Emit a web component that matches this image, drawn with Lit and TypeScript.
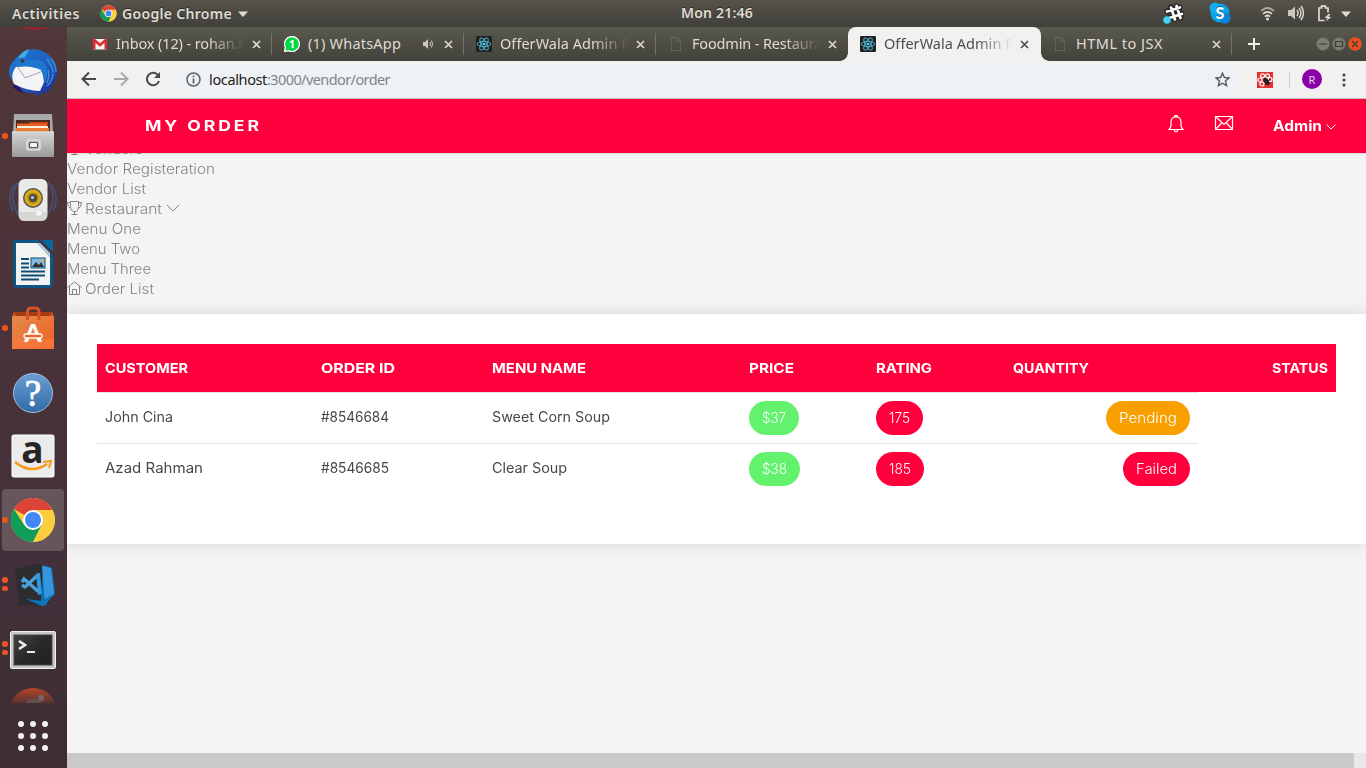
import { LitElement, html, css, svg, nothing } from "lit";
import { customElement, property, query } from "lit/decorators.js";
import { classMap } from "lit/directives/class-map.js";

/**
 * A line of text that spans `w` pixels. Tracking is adjusted by default;
 * with `wide` the letters themselves are widened.
 */
@customElement("fit-text")
class FitText extends LitElement {
  static styles = css`
    :host { display: inline-block; white-space: pre; text-align: left; }
    span { display: inline-block; transform-origin: 0 50%; }
  `;
  @property({ type: String }) t = "";
  @property({ type: Number }) w = 0;
  @property({ type: Boolean }) wide = false;
  @query("span") box!: HTMLSpanElement;
  firstUpdated() {
    const natural = this.box.getBoundingClientRect().width;
    if (this.wide) {
      this.style.width = `${this.w}px`;
      this.box.style.transform = `scaleX(${this.w / natural})`;
    } else {
      this.box.style.letterSpacing = `${(this.w - natural) / this.t.length}px`;
    }
  }
  render() {
    return html`<span>${this.t}</span>`;
  }
}

const chromeLogo = svg`
  <circle cx="24" cy="24" r="22" fill="#fcce3e"/>
  <path d="M24 24 4.900 13A22 22 0 0 1 43.100 13.400L43.500 14.200H24Z" fill="#dc4437"/>
  <path d="M4.900 13A22 22 0 0 0 24 46L33 29 24 24 14.500 28Z" fill="#109d58"/>
  <path d="M24 14h19.500A22 22 0 0 1 24 46l8.700-17Z" fill="#fcce3e"/>
  <circle cx="24" cy="24" r="10" fill="#fff"/>
  <circle cx="24" cy="24" r="8" fill="#4387f5"/>`;

const dockIcons: Record<string, unknown> = {
  mail: svg`
    <defs><linearGradient id="tb" x1="0" y1="0" x2="1" y2="1"><stop offset="0" stop-color="#1b7ad0"/><stop offset=".5" stop-color="#1f62c4"/><stop offset="1" stop-color="#23238c"/></linearGradient></defs>
    <path d="M7 10Q17-1 30 2 42 5 47 17 50 29 44 36q-2 6-9 10l1-3q-4 4-10 5l1-3q-9 1-14-3-6-2-9-8Q-3 24 2 16Z" fill="url(#tb)"/>
    <path d="M5 36 4 39q5 5 10 6l-3-6Z" fill="#2b1864"/>
    <path d="m6 20 5-4 22 5 2 13-4 9q-13 0-26-7-4-8 1-16Z" fill="#f3f4f6"/>
    <path d="m8 18 8 12 18-7" fill="none" stroke="#a0a4aa" stroke-width="1"/>
    <path d="M7 18Q9 4 22 3q-7 4-6 11 12-6 20 2 5 8 0 19-2-9-4-13Q22 17 9 19Z" fill="#1f78d0"/>
    <path d="M9 10 14 4 20 1l-4 8Z" fill="#45aee6"/>
    <circle cx="13.500" cy="13" r="2" fill="#383c46"/>
    <path d="M38 11q6 8 6 14M42 11q5 6 5 13M39 22q2 6-1 13M44 26q-1 8-6 12" fill="none" stroke="#3592dc" stroke-width="1.500"/>`,
  files: svg`
    <defs><linearGradient id="fg" x1="0" y1="0" x2="0" y2="1"><stop offset="0" stop-color="#d4d4d4"/><stop offset="1" stop-color="#9b9b9b"/></linearGradient></defs>
    <path d="M5 2H43L44 20H4Z" fill="#a9a9a9"/>
    <path d="M7 8H41V22H7Z" fill="#4b2a22"/>
    <path d="M20 10h19v3H20Z" fill="#c24514"/><path d="M8 11.500H38v3H8Z" fill="#e9601e"/>
    <path d="M8 14H39v2H8Z" fill="#fff0df"/><path d="M7 16H40v3.500H7Z" fill="#f07b36"/>
    <rect x="3" y="19.500" width="42" height="25.500" rx="1" fill="url(#fg)"/>
    <path d="M3 20H45" stroke="#e6e6e6"/>
    <rect x="18" y="28" width="13" height="10" rx="2" fill="#bdbdbd" stroke="#eee" stroke-width="1.200"/>
    <rect x="20.500" y="30.500" width="8" height="5" rx="1" fill="#f8f8f8" stroke="#555" stroke-width="1.200"/>`,
  music: svg`
    <g fill="none" stroke="#465684" stroke-width="1.600" opacity=".8"><path d="M5 9Q-3 22 4 35M9 6Q-1 21 9 38M43 9q8 13 1 26M39 6q10 15 0 32"/></g>
    <rect x="9.500" y="3" width="29" height="42" rx="6" fill="#e9eae7"/>
    <path d="M10 36H38v5q-2 4-6 4H16q-5 0-6-4Z" fill="#d6d7d4"/>
    <circle cx="24" cy="22" r="10" fill="#555753"/><circle cx="24" cy="22" r="8.500" fill="#d9ab19"/>
    <circle cx="24" cy="22" r="5.500" fill="#b38b10"/><circle cx="24" cy="22" r="4" fill="#494b4d"/>
    <circle cx="23.500" cy="21.500" r="1.600" fill="#c3c6c8"/><circle cx="30" cy="37" r="3.500" fill="#f5f5f3" stroke="#cdcdc9" stroke-width=".7"/>`,
  writer: svg`
    <path d="M7 0H29L44 15V44q0 4-4 4H8q-4 0-4-4V3Q4 0 7 0Z" fill="#0e5585"/>
    <path d="M32 0H42q2 0 2 2V12Z" fill="#0369a3"/>
    <path d="M7 3H28L41 17V45H7Z" fill="#f3f3f2"/>
    <path d="m28 3 13 14V13L31 3Z" fill="#bfcbd2"/>
    <path d="M12 19h8M12 23.500h8M12 27.500h8M12 31.500H36M12 35.500H36M12 39.500H30" stroke="#0e4d76" stroke-width="2"/>
    <rect x="22" y="18" width="14" height="10" fill="#80bce7" stroke="#0e4d76"/>
    <path d="m23 27 4-5 3 3 2-3 3 5Z" fill="#333"/><circle cx="33.500" cy="20.500" r="1.300" fill="#fdb913"/>`,
  store: svg`
    <defs><linearGradient id="sg" x1="0" y1="0" x2="1" y2="1"><stop offset="0" stop-color="#e58a50"/><stop offset="1" stop-color="#f0601f"/></linearGradient></defs>
    <path d="M5 8H43L45 13H3Z" fill="#a63a12"/><path d="M3 13 5 8l3 5M45 13l-2-5-3 5" fill="#cf5521"/>
    <rect x="3" y="12" width="42" height="33" fill="url(#sg)"/>
    <path d="M3 35H45V45H3Z" fill="#fa7d40" opacity=".6"/>
    <path d="M18.500 16V8q0-4 4-4h3.500q4 0 4 4v8" fill="none" stroke="#d85120" stroke-width="3"/>
    <text x="24" y="38" text-anchor="middle" font-family="Lato" font-weight="900" font-size="25" fill="#fff">A</text>
    <rect x="15" y="30" width="18" height="4" rx="2" fill="#ed6526" stroke="#fff" stroke-width="1.300"/>`,
  help: svg`
    <defs><linearGradient id="hg" x1="0" y1="0" x2="0" y2="1"><stop offset="0" stop-color="#6b9ed4"/><stop offset="1" stop-color="#2f6ba7"/></linearGradient></defs>
    <circle cx="24" cy="25" r="19.500" fill="url(#hg)" stroke="#a2bcd7" stroke-width="1"/>
    <text x="24" y="38" text-anchor="middle" font-family="Liberation Serif" font-size="37" fill="#fff" stroke="#fff" stroke-width=".8">?</text>`,
  amazon: svg`
    <rect x="3" y="3" width="42" height="42" rx="1.500" fill="#ebebeb" stroke="#fff"/>
    <text x="23.500" y="30.500" text-anchor="middle" font-family="Open Sans" font-weight="700" font-size="37" fill="#252525">a</text>
    <path d="M6 30q16 13 32 2" fill="none" stroke="#f89a17" stroke-width="2.600"/>
    <path d="m34 30 8-1-2 7" fill="none" stroke="#f89a17" stroke-width="2"/>`,
  chrome: chromeLogo,
  code: svg`
    <path d="m6 9 24-5 13 6-2 33-31 3Z" fill="#2b2d2f"/>
    <path d="m34 5 9 3 3 26-10 10-4-2Z" fill="#0a71b4"/>
    <path d="m33 6 9 2 3 26-9 8Z" fill="#3496dc"/>
    <path d="m30 14-14 13-3-2M31 33 15 19l-2 3" fill="none" stroke="#4aa3df" stroke-width="3.200"/>
    <path d="m27 14 4-1 2 21-4 1Z" fill="#3496dc"/>
    <path d="m17 39 16 2 11-7-7 11-4 1Z" fill="#0c76bd"/>`,
  terminal: svg`
    <defs><linearGradient id="tg" x1="0" y1="0" x2="1" y2="1"><stop offset="0" stop-color="#424242"/><stop offset=".5" stop-color="#292929"/><stop offset="1" stop-color="#202020"/></linearGradient></defs>
    <rect x="1.500" y="7.500" width="45" height="37" rx="1.500" fill="#c7c7c5" stroke="#efefed"/>
    <rect x="5" y="11" width="38" height="30" fill="url(#tg)" stroke="#444"/>
    <path d="m10 17 6 4-6 4" fill="none" stroke="#eee" stroke-width="2.600"/><path d="M18 28h8" stroke="#eee" stroke-width="2"/>`,
  gear: svg`
    <defs><linearGradient id="gg" x1="0" y1="0" x2="0" y2=".35"><stop offset="0" stop-color="#b74626"/><stop offset="1" stop-color="#4c3033"/></linearGradient></defs>
    <circle cx="24" cy="24" r="24" fill="url(#gg)"/><circle cx="32" cy="10" r="3" fill="#776467"/>
    <path d="m17 15 3-4h10l2 4Z" fill="#654e52"/>`,
};

const dockApps = [
  { icon: "mail", dots: 0 }, { icon: "files", dots: 1 }, { icon: "music", dots: 0 },
  { icon: "writer", dots: 0 }, { icon: "store", dots: 1 }, { icon: "help", dots: 0 },
  { icon: "amazon", dots: 0 }, { icon: "chrome", dots: 1, on: true }, { icon: "code", dots: 2 },
  { icon: "terminal", dots: 2 }, { icon: "gear", dots: 0 },
] as { icon: string; dots: number; on?: boolean }[];

@customElement("app-dock")
class AppDock extends LitElement {
  static styles = css`
    :host { display: flex; flex-direction: column; width: 67px; background: linear-gradient(#513739, #49323a 45%, #42303a 75%, #3d2e31); }
    .list { height: 663px; padding-top: 13px; overflow: hidden; background: radial-gradient(ellipse 14px 3px at 34px 0, #8c2832 90%, transparent); }
    .item { height: 64px; display: grid; grid-template-columns: 9px 48px; align-items: center; position: relative; }
    .item.on::before { content: ""; position: absolute; left: 2px; top: 1px; width: 62px; height: 62px; background: #66555a; border-radius: 4px; }
    .dots { display: grid; gap: 3px; padding-left: 2px; z-index: 1; }
    .dot { width: 5.500px; height: 5.500px; border-radius: 50%; background: #ee5323; }
    .icon { width: 48px; height: 48px; z-index: 1; display: block; overflow: visible; }
    .apps { display: grid; grid-template-columns: repeat(3, 6px); gap: 6px; padding: 18px 0 0 18px; }
    .apps i { width: 6px; height: 6px; border-radius: 50%; background: #f2f0f0; }
  `;
  render() {
    return html`
      <div class="list">
        ${dockApps.map((a) => html`
          <div class=${classMap({ item: true, on: !!a.on })}>
            <div class="dots">${Array.from({ length: a.dots }, () => html`<div class="dot"></div>`)}</div>
            <svg class="icon" viewBox="0 0 48 48">${dockIcons[a.icon]}</svg>
          </div>`)}
      </div>
      <div class="apps">${Array.from({ length: 9 }, () => html`<i></i>`)}</div>`;
  }
}

@customElement("top-panel")
class TopPanel extends LitElement {
  static styles = css`
    :host { display: grid; grid-template-columns: 681px 72px 1fr; align-items: center; height: 27px; background: linear-gradient(#57534b, #403f3a); color: #dfdbd2; font: 600 14px/20px "Noto Sans", sans-serif; text-shadow: 0 -1px rgba(0, 0, 0, .45); }
    .clock { margin-top: -1px; }
    .left { display: flex; align-items: center; padding-left: 12px; }
    .logo { width: 17px; height: 17px; margin: 0 5px 0 20px; }
    .caret { width: 10px; height: 6px; margin-left: 6px; }
    .right { display: flex; align-items: center; justify-content: flex-end; padding-right: 15px; }
    .right svg { display: block; flex: none; }
    .slack { width: 22px; height: 22px; margin: -1px 25px 0 0; }
    .skype { width: 22px; height: 22px; margin: -2px 29px 0 0; }
    .net { width: 15px; height: 15px; margin: -1px 12px 0 0; }
    .vol { width: 17px; height: 16px; margin: -1px 13px 0 0; }
    .bat { width: 15px; height: 17px; margin: -1px 9px 0 0; }
    .right .menu { width: 10px; height: 6px; }
  `;
  render() {
    return html`
      <div class="left">
        <fit-text t="Activities" w="68"></fit-text>
        <svg class="logo" viewBox="1 1 46 46">${chromeLogo}</svg>
        <fit-text t="Google Chrome" w="110"></fit-text>
        <svg class="caret" viewBox="0 0 10 6"><path d="M0 .500h10L5 6Z" fill="#dfdbd2"/></svg>
      </div>
      <fit-text class="clock" t="Mon 21:46" w="72"></fit-text>
      <div class="right">
        <svg class="slack" viewBox="0 0 22 22"><g fill="none" stroke-linecap="round"><path d="m9 5 4 12M14.500 4l4 12M5 9.500l13-4M7 16l13-4" stroke="#252421" stroke-width="5.500"/><path d="m9 5.500 4 12M14.500 4l4 12M5 9.500l13-4M7 16l13-4" stroke="#fff" stroke-width="2.700"/></g><circle cx="5" cy="18" r="3.700" fill="#41d4f5"/></svg>
        <svg class="skype" viewBox="0 0 22 22"><circle cx="11" cy="11" r="9.500" fill="#08a5ec"/><circle cx="6" cy="6" r="5.500" fill="#12acf0"/><circle cx="16" cy="16" r="5.500" fill="#0784dc"/><text x="11" y="16.500" text-anchor="middle" font-family="Lato" font-weight="900" font-size="16" fill="#fff">S</text></svg>
        <svg class="net" viewBox="0 0 15 15"><g fill="none" stroke="#dfdbd2" stroke-width="1.700"><path d="M1 5q6.500-6 13 0" opacity=".65"/><path d="M3 7.800q4.500-4 9 0M5 10.600q2.500-2.200 5 0"/></g><circle cx="7.500" cy="13" r="1.500" fill="#dfdbd2"/></svg>
        <svg class="vol" viewBox="0 0 17 16"><path d="M1 5h3l4-3.500v13L4 11H1Z" fill="#c9c6be"/><path d="M10 5q2 3 0 6M12 3q4 5 0 10M14 1q5 7 0 14" fill="none" stroke="#dfdbd2" stroke-width="1.400"/></svg>
        <svg class="bat" viewBox="0 0 15 17"><path d="M7.500 15.500H2V3h2.500V1.200h4V3H11v4.500" fill="none" stroke="#dfdbd2" stroke-width="1.700"/><path d="m11.500 9-4 4h3l-2 3.500 6-4.500h-3l2-3Z" fill="#dfdbd2"/></svg>
        <svg class="menu" viewBox="0 0 10 6"><path d="M0 .500h10L5 6Z" fill="#dfdbd2"/></svg>
      </div>`;
  }
}

const favicons: Record<string, unknown> = {
  gmail: svg`<path d="M1 3h14v10.500H1Z" fill="#f5f3f1"/><path d="M2.200 13.500V4L8 9l5.800-5v9.500" fill="none" stroke="#dd2c2f" stroke-width="2.600"/>`,
  whatsapp: svg`<path d="M8 .500A7.500 7.500 0 1 1 4.500 14.700L.500 15.500l.9-4A7.500 7.500 0 0 1 8 .500Z" fill="#00d744" stroke="#fff" stroke-width="1.300"/><text x="8" y="12" text-anchor="middle" font-family="Noto Sans" font-size="10.500" font-weight="700" fill="#fff">1</text>`,
  react: svg`<rect width="16" height="16" rx="1" fill="#222"/><g fill="none" stroke="#4cb5d2" stroke-width=".9"><ellipse cx="8" cy="8" rx="6.800" ry="2.600"/><ellipse cx="8" cy="8" rx="6.800" ry="2.600" transform="rotate(60 8 8)"/><ellipse cx="8" cy="8" rx="6.800" ry="2.600" transform="rotate(120 8 8)"/></g><circle cx="8" cy="8" r="1.300" fill="#61dafb"/>`,
  page: svg`<path d="M3.500 1.500H9L12.500 5v9.500h-9ZM9 1.500V5h3.500" fill="none" stroke="#63635f"/>`,
};

const tabs = [
  { icon: "gmail", t: "Inbox (12) - rohan.k", w: 130 },
  { icon: "whatsapp", t: "(1) WhatsApp", w: 93, sound: true },
  { icon: "react", t: "OfferWala Admin P", w: 130 },
  { icon: "page", t: "Foodmin - Restaura", w: 130, last: true },
  { icon: "react", t: "OfferWala Admin P", w: 130, on: true },
  { icon: "page", t: "HTML to JSX", w: 87 },
] as { icon: string; t: string; w: number; sound?: boolean; on?: boolean; last?: boolean }[];

@customElement("browser-bar")
class BrowserBar extends LitElement {
  static styles = css`
    :host { display: block; font: 14.500px "Noto Sans", sans-serif; }
    .tabs { display: flex; height: 34px; padding-left: 13px; background: linear-gradient(#5a594f, #42413b); color: #dfdbd2; }
    .tab { width: 191px; flex: none; height: 34px; display: flex; align-items: center; border-right: 1px solid; border-image: linear-gradient(transparent 7px, #74736b 7px, #74736b 27px, transparent 27px) 1; }
    .tab.on { position: relative; width: 193px; margin-right: -1px; border: 0; border-radius: 8px 8px 0 0; background: #f2f1f0; color: #4c4c4c; }
    .tab.last { border-color: transparent; border-image: none; }
    .tab.on::before, .tab.on::after { content: ""; position: absolute; bottom: 0; width: 8px; height: 8px; }
    .tab.on::before { left: -8px; background: radial-gradient(circle at 0 0, transparent 7.500px, #f2f1f0 8px); }
    .tab.on::after { right: -8px; background: radial-gradient(circle at 100% 0, transparent 7.500px, #f2f1f0 8px); }
    .fav { width: 16px; height: 16px; margin: 0 8px 0 12px; flex: none; }
    .label { width: 130px; white-space: nowrap; line-height: 22px; margin-top: -2px; -webkit-mask-image: linear-gradient(90deg, #000 92px, rgba(0, 0, 0, .04) 127px); }
    .label.short { width: 118px; }
    .label.plain { -webkit-mask-image: none; }
    .snd { width: 12px; height: 12px; margin: 0 4px 0 -4px; flex: none; }
    .x { width: 9px; height: 9px; margin-left: 6px; flex: none; }
    .plus { width: 12px; height: 12px; margin: 11px 0 0 16px; }
    .win { width: 50px; height: 16px; margin: 9px 0 0 55px; }
    .tools { height: 37px; display: flex; align-items: center; background: #f2f1f0; border-bottom: 1px solid #c4c4c3; }
    .nav { width: 16px; height: 16px; margin: -1px 0 0 14px; }
    .nav + .nav { margin-left: 16px; }
    .url { width: 1064px; height: 32px; margin: 0 0 0 16px; border-radius: 16px; background: #eef2f4; display: flex; align-items: center; color: #80858a; }
    .url fit-text { margin-top: -1px; }
    .info { width: 15px; height: 15px; margin: 0 8px 0 9px; }
    .host { color: #1e2023; }
    .star { width: 15px; height: 15px; margin: 0 11px 0 auto; }
    .bee { width: 16px; height: 16px; margin-left: 16px; }
    .sep { width: 1px; height: 16px; background: #cbcbca; margin: 0 12px 0 16px; }
    .me { width: 20px; height: 20px; border-radius: 50%; background: #8a00a6; color: #e9d2ed; font-size: 11px; display: grid; place-items: center; margin-top: -1px; }
    .more { width: 4px; height: 16px; margin-left: 20px; }
    svg { display: block; }
  `;
  render() {
    return html`
      <div class="tabs">
        ${tabs.map((b) => html`
          <div class=${classMap({ tab: true, on: !!b.on, last: !!b.last })}>
            <svg class="fav" viewBox="0 0 16 16">${favicons[b.icon]}</svg>
            <div class=${classMap({ label: true, short: !!b.sound, plain: b.w < 100 })}><fit-text t=${b.t} w=${b.w}></fit-text></div>
            ${b.sound ? html`<svg class="snd" viewBox="0 0 12 12"><path d="M1 4h2l3-3v10L3 8H1Z" fill="#cac7bf"/><path d="M8 4q1 2 0 4M9.500 2.500q2 3.500 0 7" fill="none" stroke="#cac7bf"/></svg>` : nothing}
            <svg class="x" viewBox="0 0 9 9"><path d="m1 1 7 7M8 1 1 8" stroke="currentColor" stroke-width="1.600"/></svg>
          </div>`)}
        <svg class="plus" viewBox="0 0 12 12"><path d="M6 0v12M0 6h12" stroke="#eeece6" stroke-width="2"/></svg>
        <svg class="win" viewBox="0 0 50 16">
          <circle cx="8" cy="8" r="6.500" fill="#7b7a73"/><circle cx="24" cy="8" r="6.500" fill="#7b7a73"/><circle cx="40" cy="8" r="6.700" fill="#ee4f20"/>
          <path d="M4 8h8M20.500 5.500h7v5h-7ZM37 5l6 6M43 5l-6 6" fill="none" stroke="#3d3c37" stroke-width="1.200"/>
        </svg>
      </div>
      <div class="tools">
        <svg class="nav" viewBox="0 0 16 16"><path d="M15 8H2M8 1.500 1.500 8 8 14.500" fill="none" stroke="#474747" stroke-width="2"/></svg>
        <svg class="nav" viewBox="0 0 16 16"><path d="M1 8h13M8 1.500 14.500 8 8 14.500" fill="none" stroke="#a9a9a8" stroke-width="2"/></svg>
        <svg class="nav" viewBox="0 0 16 16"><path d="M13 4.200A6.200 6.200 0 1 0 14 10" fill="none" stroke="#474747" stroke-width="2"/><path d="M15 1v6H9Z" fill="#474747"/></svg>
        <div class="url">
          <svg class="info" viewBox="0 0 15 15"><circle cx="7.500" cy="7.500" r="6.500" fill="none" stroke="#5f6368" stroke-width="1.500"/><path d="M7.500 6.500v5M7.500 3.500v1.700" stroke="#5f6368" stroke-width="1.700"/></svg>
          <fit-text class="host" t="localhost" w="58"></fit-text><fit-text t=":3000/vendor/order" w="123"></fit-text>
          <svg class="star" viewBox="0 0 15 15"><path d="m7.500 1.200 1.900 4.300 4.700.4-3.600 3.100 1.100 4.600-4.100-2.400-4.100 2.400 1.100-4.600L.9 5.900l4.700-.4Z" fill="none" stroke="#55595e" stroke-width="1.400"/></svg>
        </div>
        <svg class="bee" viewBox="0 0 16 16"><rect width="16" height="16" fill="#e43134"/><g fill="none" stroke="#fff" stroke-width="1.200"><circle cx="5.500" cy="3.800" r="2"/><circle cx="10.500" cy="3.800" r="2"/><circle cx="3" cy="8" r="2"/><circle cx="13" cy="7.500" r="2"/><circle cx="5" cy="12" r="2"/></g><ellipse cx="9.500" cy="9.500" rx="2.300" ry="4" transform="rotate(-35 9.500 9.500)" fill="#262224"/><path d="m6 8 7 3M8 13l5-6" stroke="#262224"/></svg>
        <div class="sep"></div>
        <div class="me">R</div>
        <svg class="more" viewBox="0 0 4 16"><g fill="#474747"><circle cx="2" cy="3" r="1.600"/><circle cx="2" cy="8" r="1.600"/><circle cx="2" cy="13" r="1.600"/></g></svg>
      </div>`;
  }
}

const menu = [
  { t: "Vendors", w: 58, icon: "cup" },
  { t: "Vendor Registeration", w: 148 },
  { t: "Vendor List", w: 79 },
  { t: "Restaurant", w: 77, icon: "cup", open: true },
  { t: "Menu One", w: 74 },
  { t: "Menu Two", w: 73 },
  { t: "Menu Three", w: 84 },
  { t: "Order List", w: 69, icon: "home" },
] as { t: string; w: number; icon?: string; open?: boolean }[];

const menuIcons: Record<string, unknown> = {
  cup: svg`<path d="M3.500.500h8v5q0 5-4 5t-4-5ZM3.500 1.500h-3q0 5 3.500 6M11.500 1.500h3q0 5-3.500 6M7.500 10.500v3M4.500 13.500h6"/>`,
  home: svg`<path d="M.500 6.500 7.500.800l7 5.700M2.500 5v8.500h10V5M5.500 13.500v-5h4v5"/>`,
};

const columns = [["CUSTOMER", 83], ["ORDER ID", 74], ["MENU NAME", 94], ["PRICE", 45], ["RATING", 56], ["QUANTITY", 76], ["STATUS", 56]] as [string, number][];

const orders = [
  { name: ["John Cina", 68], id: ["#8546684", 68], dish: ["Sweet Corn Soup", 118], price: ["$37", 24], rating: ["175", 21], state: ["Pending", 58], tone: "amber" },
  { name: ["Azad Rahman", 98], id: ["#8546685", 68], dish: ["Clear Soup", 75], price: ["$38", 25], rating: ["185", 22], state: ["Failed", 41], tone: "red" },
];

const fit = ([t, w]: any) => html`<fit-text wide t=${t} w=${w}></fit-text>`;

@customElement("order-page")
class OrderPage extends LitElement {
  static styles = css`
    :host { display: flex; flex-direction: column; min-height: 0; background: #f4f4f4; font: 14px/20px Inter, sans-serif; color: #444; }
    .head { height: 54px; flex: none; display: flex; align-items: center; background: #ff003c; color: #fff; box-shadow: 0 1px 2px rgba(0, 0, 0, .12); z-index: 1; }
    .title { font-weight: 700; font-size: 15px; letter-spacing: 2.500px; margin-left: 77.500px; }
    .bell { width: 16px; height: 18px; margin: -5px 30px 0 auto; }
    .env { width: 20px; height: 16px; margin: -6px 39px 0 0; }
    .admin { font-weight: 700; }
    .chev { width: 10px; height: 6px; margin: 2px 30px 0 4px; }
    .main { flex: 1; min-height: 0; overflow: hidden; }
    .menu { margin-top: -14px; padding-bottom: 15px; color: #858585; font-weight: 300; }
    .entry { display: flex; height: 20px; align-items: center; }
    .mi { width: 15px; height: 15px; margin: -2px 3px 0 -.5px; }
    .down { width: 14px; height: 8px; margin: -2px 0 0 4px; }
    .card { height: 200px; padding: 30px 30px 0; background: #fff; box-shadow: 0 0 15px rgba(0, 0, 0, .13); }
    .row { display: grid; grid-template-columns: 216px 171px 257px 127px 137px 193px 138px; align-items: center; }
    .row > div { padding: 0 8px; }
    .th { height: 48px; background: #ff003c; color: #fff; font-weight: 700; font-size: 13.500px; }
    .td { height: 50px; width: 1101px; border-top: 1px solid #e3e5e7; grid-template-columns: 216px 171px 257px 127px 137px 193px; color: #484848; }
    .td .txt { padding-bottom: 2px; }
    .end { text-align: right; }
    .pill { display: inline-block; padding: 7px 13px; border-radius: 17px; color: #fff; font-weight: 300; vertical-align: top; }
    .green { background: #63f26d; }
    .red { background: #ff003c; }
    .amber { background: #f99f00; }
    .scroll { height: 15px; flex: none; background: #e8e8e8; }
    .thumb { height: 15px; width: 1287px; background: #c9c9c9; }
    svg { display: block; fill: none; stroke: currentColor; }
  `;
  render() {
    return html`
      <div class="head">
        <div class="title">${fit(["MY ORDER", 117])}</div>
        <svg class="bell" viewBox="0 0 16 18" stroke-width="1.200"><path d="M1 14.500h14q-2-2-2-4V7q0-5-5-5T3 7v3.500q0 2-2 4ZM7 2V.500h2V2M6.500 15q0 2 1.500 2t1.500-2"/></svg>
        <svg class="env" viewBox="0 0 20 16" stroke-width="1.200"><path d="M1.500 1.500h17v13h-17ZM1.500 1.500 10 9.500l8.500-8M1.500 14.500l6.500-7M18.500 14.500 12 7.500"/></svg>
        <div class="admin">${fit(["Admin", 49])}</div>
        <svg class="chev" viewBox="0 0 10 6"><path d="m.500.500 4.500 4.500L9.500.500"/></svg>
      </div>
      <div class="main">
        <div class="menu">
          ${menu.map((m) => html`<div class="entry">
            ${m.icon ? html`<svg class="mi" viewBox="0 0 15 15">${menuIcons[m.icon]}</svg>` : nothing}
            ${fit([m.t, m.w])}
            ${m.open ? html`<svg class="down" viewBox="0 0 14 8"><path d="m.800.800 6.200 6.200 6.200-6.200"/></svg>` : nothing}
          </div>`)}
        </div>
        <div class="card">
          <div class="row th">${columns.map((c, i) => html`<div class=${i === 6 ? "end" : ""}>${fit(c)}</div>`)}</div>
          ${orders.map((o) => html`<div class="row td">
            <div class="txt">${fit(o.name)}</div><div class="txt">${fit(o.id)}</div><div class="txt">${fit(o.dish)}</div>
            <div><span class="pill green">${fit(o.price)}</span></div>
            <div><span class="pill red">${fit(o.rating)}</span></div>
            <div class="end"><span class="pill ${o.tone}">${fit(o.state)}</span></div>
          </div>`)}
        </div>
      </div>
      <div class="scroll"><div class="thumb"></div></div>`;
  }
}

@customElement("app-root")
class AppRoot extends LitElement {
  static styles = css`
    :host { display: grid; grid-template: 27px 741px / 67px 1299px; width: 1366px; height: 768px; overflow: hidden; }
    .panel { grid-column: 1 / 3; }
    .window { display: flex; flex-direction: column; min-width: 0; overflow: hidden; }
    .page { flex: 1; }
  `;
  render() {
    return html`
      <top-panel class="panel"></top-panel>
      <app-dock></app-dock>
      <div class="window"><browser-bar></browser-bar><order-page class="page"></order-page></div>`;
  }
}
